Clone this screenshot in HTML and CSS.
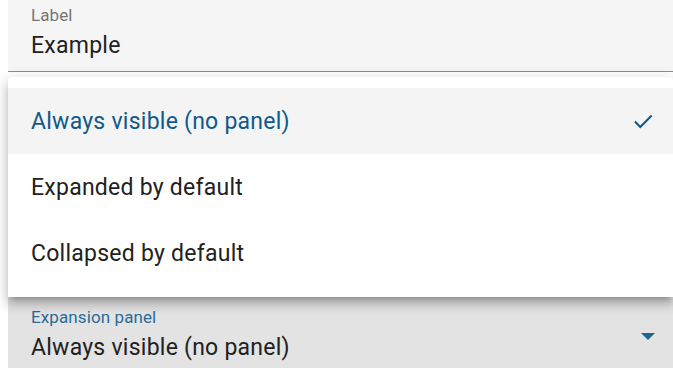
FILE: index.html
```html
<!DOCTYPE html>
<html lang="en">
<head>
    <meta charset="UTF-8">
    <meta name="viewport" content="width=device-width, initial-scale=1.0">
    <title>Select field</title>
    <link rel="stylesheet" href="styles.css">
</head>
<body>
    <div class="form">
        <div class="field">
            <label class="field-label">Label</label>
            <div class="field-value">Example</div>
        </div>

        <div class="field select focused">
            <label class="field-label">Expansion panel</label>
            <div class="field-value">Always visible (no panel)</div>
            <span class="arrow"></span>
        </div>

        <ul class="menu">
            <li class="menu-item selected">
                <span>Always visible (no panel)</span>
                <svg class="check" width="26" height="26" viewBox="0 0 24 24"><path d="M4.5 12.5l5 5L20 7" fill="none" stroke="currentColor" stroke-width="1.9"/></svg>
            </li>
            <li class="menu-item"><span>Expanded by default</span></li>
            <li class="menu-item"><span>Collapsed by default</span></li>
        </ul>
    </div>
</body>
</html>
```

FILE: styles.css
```css
body {
    margin: 0;
    padding-left: 8px;
    font-family: Roboto, "Noto Sans", sans-serif;
    background-color: #ffffff;
    color: #212121;
    overflow: hidden;
}

.form {
    position: relative;
    display: flex;
    flex-direction: column;
    gap: 219px;
}

.field {
    position: relative;
    height: 72px;
    padding: 5px 23px 0;
    box-sizing: border-box;
    background-color: #f5f5f5;
    border-bottom: 1px solid #8a8a8a;
    display: flex;
    flex-direction: column;
}

.field-label {
    font-size: 17px;
    line-height: 20px;
    letter-spacing: 0.1px;
    color: #757575;
}

.field-value {
    margin-top: 8px;
    font-size: 23px;
    line-height: 26px;
    letter-spacing: 0.25px;
}

.field.select {
    padding-top: 16px;
    height: 90px;
}

.field.focused {
    background-color: #e3e3e3;
}

.field.focused .field-label {
    color: #2b6b98;
}

.arrow {
    position: absolute;
    right: 18px;
    top: 42px;
    width: 0;
    height: 0;
    border-left: 7px solid transparent;
    border-right: 7px solid transparent;
    border-top: 7px solid #1f6593;
}

.menu {
    position: absolute;
    top: 77px;
    left: 0;
    right: 0;
    margin: 0;
    padding: 11px 0;
    list-style: none;
    background-color: #ffffff;
    border-radius: 4px 4px 0 0;
    box-shadow: 0 5px 5px -3px rgba(0, 0, 0, 0.2), 0 8px 10px 1px rgba(0, 0, 0, 0.14), 0 3px 14px 2px rgba(0, 0, 0, 0.12);
}

.menu-item {
    height: 66px;
    padding: 0 17px 0 23px;
    display: flex;
    align-items: center;
    justify-content: space-between;
    font-size: 23px;
    letter-spacing: 0.25px;
    color: #212121;
}

.menu-item.selected {
    background-color: #f4f4f4;
    color: #0f5a8a;
}

.check {
    color: #0f5a8a;
}
```
